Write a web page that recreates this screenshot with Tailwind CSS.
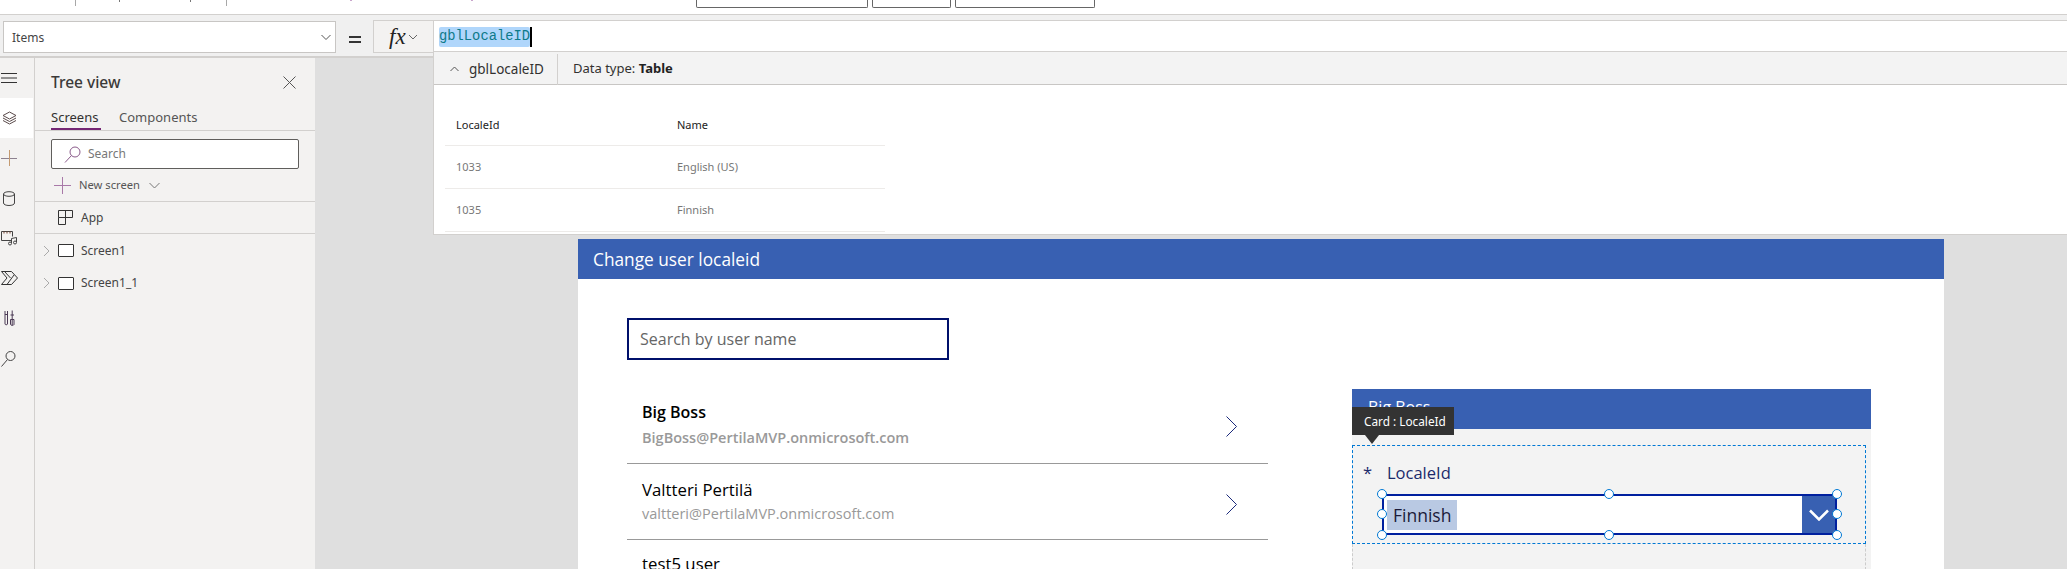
<!DOCTYPE html>
<html>
<head>
<meta charset="utf-8">
<script src="https://cdn.jsdelivr.net/npm/@tailwindcss/browser@4"></script>
<title>Power Apps</title>
</head>
<body class="bg-white">
<div class="relative w-[2067px] h-[569px] overflow-hidden flex flex-col font-['Noto_Sans',sans-serif] text-[#323130]">

  <!-- ribbon remainder -->
  <div class="h-[14px] shrink-0 bg-white relative">
    <div class="flex h-[6px]">
      <div class="w-[76px] border-r border-[#a8a8a8]"></div>
      <div class="w-[44px] h-[2px] border-r border-[#777]"></div>
      <div class="w-[71px] h-[2px] border-r border-[#777]"></div>
      <div class="w-[36px] border-r border-[#a8a8a8]"></div>
      <div class="w-[125px] h-[1px] border-r-2 border-[#c9a6cc]"></div>
      <div class="w-[121px] h-[1px] border-r-2 border-[#c9a6cc]"></div>
    </div>
    <div class="absolute left-[696px] top-0 flex gap-[4px]">
      <div class="w-[172px] h-[8px] border border-t-0 border-[#666] rounded-b-[2px] bg-white"></div>
      <div class="w-[79px] h-[8px] border border-t-0 border-[#666] rounded-b-[2px] bg-white"></div>
      <div class="w-[140px] h-[8px] border border-t-0 border-[#666] rounded-b-[2px] bg-white"></div>
    </div>
  </div>

  <!-- formula bar -->
  <div class="h-[43px] shrink-0 bg-[#f0f0f0] border-y border-[#d2d0ce] flex items-start">
    <div class="ml-[3px] mt-[6px] w-[333px] h-[32px] bg-white border border-[#c8c6c4] flex items-center justify-between pl-[8px] pr-[3px] text-[12px] text-[#444]">
      <span class="mt-[1px]">Items</span>
      <svg class="w-[12px] h-[12px]" viewBox="0 0 12 12" fill="none" stroke="#555" stroke-width="1"><path d="M1.5 4l4.5 4.5 4.500-4.500"/></svg>
    </div>
    <div class="w-[37px] mt-[6px] h-[32px] flex items-center justify-center">
      <div class="w-[12px] h-[7px] mt-[4px] border-y-2 border-[#333]"></div>
    </div>
    <div class="w-[60px] h-[33px] mt-[5px] bg-[#f3f2f1] border-y border-l border-[#d2d0ce] flex items-center pl-[15px] gap-[2px]">
      <span class="font-['Liberation_Serif',serif] italic text-[23px] leading-none text-[#222]">fx</span>
      <svg class="w-[10px] h-[10px]" viewBox="0 0 10 10" fill="none" stroke="#666" stroke-width="1"><path d="M1 3l4 4 4-4"/></svg>
    </div>
    <div class="flex-1 h-[32px] mt-[5px] bg-white border-y border-l border-[#d2d0ce] flex items-center pl-[5px]">
      <span class="mt-[1px] h-[20px] leading-[20px] bg-[#b0d6fb] rounded-[2px] font-['Liberation_Mono',monospace] text-[13.8px] text-[#0e7a8a]">gblLocaleID</span>
      <span class="mt-[1px] w-[2px] h-[20px] bg-black"></span>
    </div>
  </div>

  <!-- main -->
  <div class="flex-1 flex min-h-0 border-t border-[#d2d0ce]">
    <!-- rail -->
    <div class="w-[35px] shrink-0 bg-[#f3f2f1] border-r border-[#d2d0ce] flex flex-col">
      <div class="h-[40px] flex items-center pl-[1px]">
        <svg width="16" height="12" viewBox="0 0 16 12" stroke="#333" stroke-width="1"><path d="M0 1.500h16M0 6h16M0 10.500h16"/></svg>
      </div>
      <div class="h-[40px] w-[33px] bg-white flex items-center pl-[2px]">
        <svg width="15" height="15" viewBox="0 0 15 15" fill="none" stroke="#5a4a4a" stroke-width="1"><path d="M7.500 1L14 4.500 7.500 8 1 4.500z"/><path d="M1 7l6.500 3.500L14 7"/><path d="M1 9.500L7.500 13 14 9.500"/></svg>
      </div>
      <div class="h-[40px] flex items-center pl-[1px]">
        <svg width="16" height="16" viewBox="0 0 16 16" stroke-width="1"><path d="M0 8.500h16" stroke="#8d8290"/><path d="M8.500 0v16" stroke="#c49a70"/></svg>
      </div>
      <div class="h-[40px] flex items-center pl-[3px]">
        <svg width="12" height="15" viewBox="0 0 12 15" fill="none" stroke="#444" stroke-width="1"><path d="M.5 3v9c0 1.500 2.500 2.500 5.500 2.500s5.500-1 5.500-2.500V3"/><ellipse cx="6" cy="3" rx="5.500" ry="2.300"/></svg>
      </div>
      <div class="h-[40px] flex items-center pl-[1px]">
        <svg width="17" height="15" viewBox="0 0 17 15" fill="none" stroke="#444" stroke-width="1"><path d="M10 9.500H.5V.5h11v5"/><path d="M3 .5v2M6 .5v2M9 .5v2" stroke="#743"/><path d="M10.500 12V7.500l5-1V11"/><circle cx="9" cy="12.500" r="1.500"/><circle cx="14" cy="11.500" r="1.500"/></svg>
      </div>
      <div class="h-[40px] flex items-center pl-[1px]">
        <svg width="17" height="14" viewBox="0 0 17 14" fill="none" stroke="#333" stroke-width="1"><path d="M.5.500h10l6 6.500-6 6.500H.5L6 7z"/><path d="M6 13.500L13 4M3.500 .5L9.500 7"/></svg>
      </div>
      <div class="h-[40px] flex items-center pl-[4px]">
        <svg width="11" height="16" viewBox="0 0 11 16" fill="none" stroke="#4b3a55" stroke-width="1"><path d="M1 1v13c0 1 2.500 1 2.500 0V1M1 4.500h2.500"/><path d="M6.500 5h3.500M8.200 .5v15"/><path d="M6.500 9.500h3.500v5c0 1-3.500 1-3.500 0z"/></svg>
      </div>
      <div class="mt-[3px] h-[34px] flex items-center pl-[1px]">
        <svg width="15" height="17" viewBox="0 0 15 17" fill="none" stroke="#444" stroke-width="1"><circle cx="9.500" cy="6" r="4.500"/><path d="M6.500 9.500L.5 16.500"/></svg>
      </div>
    </div>

    <!-- tree view -->
    <div class="w-[280px] shrink-0 bg-[#f3f2f1] flex flex-col">
      <div class="h-[45px] pt-[4px] pl-[16px] pr-[19px] flex items-center justify-between">
        <span class="text-[15.500px] font-medium text-[#3b3a39]">Tree view</span>
        <svg width="13" height="13" viewBox="0 0 13 13" stroke="#555" stroke-width="1"><path d="M.5.500l12 12M12.500.500l-12 12"/></svg>
      </div>
      <div class="h-[28px] border-b border-[#d2d0ce] flex pl-[16px] gap-[18px] text-[13px] leading-[28px]">
        <span class="w-[50px] h-[27px] border-b-[2px] border-[#742774] text-[#323130]">Screens</span>
        <span class="text-[#555]">Components</span>
      </div>
      <div class="pt-[8px] pl-[16px]">
        <div class="w-[248px] h-[30px] border border-[#605e5c] rounded-[2px] bg-white flex items-center pl-[12px] gap-[7px] text-[12px] text-[#777]">
          <svg width="17" height="17" viewBox="0 0 17 17" fill="none" stroke="#8a5a8a" stroke-width="1"><circle cx="11" cy="6" r="5"/><path d="M7.500 9.500L1 16.500"/></svg>
          <span>Search</span>
        </div>
      </div>
      <div class="h-[33px] pl-[19px] flex items-center border-b border-[#d2d0ce] text-[11.200px] text-[#555]">
        <svg width="17" height="17" viewBox="0 0 17 17" stroke="#a879a8" stroke-width="1"><path d="M0 8.500h17M8.500 0v17"/></svg>
        <span class="ml-[8px]">New screen</span>
        <svg class="ml-[9px]" width="11" height="11" viewBox="0 0 11 11" fill="none" stroke="#777" stroke-width="1"><path d="M.5 3l5 5 5-5"/></svg>
      </div>
      <div class="h-[32px] pl-[23px] flex items-center border-b border-[#d2d0ce] text-[12px] text-[#444]">
        <svg width="15" height="15" viewBox="0 0 15 15" fill="none" stroke="#333" stroke-width="1"><path d="M.5.500h14v7h-14zM.5 7.500v7h7V.5"/></svg>
        <span class="ml-[8px]">App</span>
      </div>
      <div class="h-[33px] pl-[5px] flex items-center text-[12px] text-[#444]">
        <svg width="12" height="12" viewBox="0 0 12 12" fill="none" stroke="#aaa" stroke-width="1"><path d="M4 1l5 5-5 5"/></svg>
        <span class="ml-[6px] w-[16px] h-[13px] border border-[#333] bg-white rounded-[1px]"></span>
        <span class="ml-[7px]">Screen1</span>
      </div>
      <div class="h-[32px] pl-[5px] flex items-center text-[12px] text-[#444]">
        <svg width="12" height="12" viewBox="0 0 12 12" fill="none" stroke="#aaa" stroke-width="1"><path d="M4 1l5 5-5 5"/></svg>
        <span class="ml-[6px] w-[16px] h-[13px] border border-[#333] bg-white rounded-[1px]"></span>
        <span class="ml-[7px]">Screen1_1</span>
      </div>
    </div>

    <!-- canvas -->
    <div class="flex-1 bg-[#dfdfdf] pl-[263px] pt-[181px] min-w-0 overflow-hidden">
      <div class="w-[1366px] h-[400px] bg-white font-['Open_Sans',sans-serif]">
        <div class="h-[40px] bg-[#3860b2] text-white text-[17.300px] leading-[41px] pl-[15px]">Change user localeid</div>
        <div class="flex">
          <!-- gallery column -->
          <div class="w-[774px] pl-[49px]">
            <div class="mt-[39px] w-[322px] h-[42px] border-2 border-[#00106b] flex items-center pl-[11px] text-[16px] text-[#666]">Search by user name</div>
            <div class="mt-[25px] w-[641px]">
              <div class="h-[79px] border-b border-[#999] flex items-center justify-between pl-[15px] pr-[31px] pt-[2px]">
                <div>
                  <div class="text-[16px] leading-[25px] font-semibold text-black">Big Boss</div>
                  <div class="text-[14.500px] leading-[25px] font-semibold text-[#999]">BigBoss@PertilaMVP.onmicrosoft.com</div>
                </div>
                <svg class="mt-[3px]" width="11" height="21" viewBox="0 0 11 21" fill="none" stroke="#1b2a7b" stroke-width="1"><path d="M.5.500l10 10-10 10"/></svg>
              </div>
              <div class="h-[76px] border-b border-[#999] flex items-center justify-between pl-[15px] pr-[31px]">
                <div>
                  <div class="text-[16.800px] leading-[25px] text-black">Valtteri Pertilä</div>
                  <div class="text-[14.500px] leading-[24px] text-[#999]">valtteri@PertilaMVP.onmicrosoft.com</div>
                </div>
                <svg class="mt-[5px]" width="11" height="21" viewBox="0 0 11 21" fill="none" stroke="#1b2a7b" stroke-width="1"><path d="M.5.500l10 10-10 10"/></svg>
              </div>
              <div class="pl-[15px] pt-[11px] text-[16.800px] leading-[25px] text-black">test5 user</div>
            </div>
          </div>
          <!-- form -->
          <div class="relative mt-[110px] w-[519px] h-[180px] bg-[#f3f3f3]">
            <div class="h-[40px] bg-[#3860b2] text-white text-[16px] leading-[36px] pl-[16px]">Big Boss</div>
            <div class="relative ml-0 mt-[16px] w-[514px] h-[99px] border border-dashed border-[#0078d4]">
              <div class="flex items-center h-[48px] pt-[6px] text-[16.500px] text-[#1b2a6b]">
                <span class="ml-[10px] w-[24px]">*</span><span>LocaleId</span>
              </div>
              <div class="relative ml-[29px] w-[455px] h-[41px] border-2 border-[#00209f] bg-white flex items-center justify-between">
                <span class="ml-[3px] h-[30px] leading-[30px] px-[6px] bg-[#b9c9e3] text-[17.500px] text-[#1b1b3a]">Finnish</span>
                <div class="w-[33px] h-full bg-[#3860b2] flex items-center justify-center">
                  <svg width="20" height="12" viewBox="0 0 20 12" fill="none" stroke="#fff" stroke-width="2.500"><path d="M1 1.500l9 9 9-9"/></svg>
                </div>
                <span class="absolute -left-[7px] -top-[7px] w-[10px] h-[10px] rounded-full bg-white border border-[#0078d4]"></span>
                <span class="absolute left-[220px] -top-[7px] w-[10px] h-[10px] rounded-full bg-white border border-[#0078d4]"></span>
                <span class="absolute -right-[7px] -top-[7px] w-[10px] h-[10px] rounded-full bg-white border border-[#0078d4]"></span>
                <span class="absolute -left-[7px] top-[13px] w-[10px] h-[10px] rounded-full bg-white border border-[#0078d4]"></span>
                <span class="absolute -right-[7px] top-[13px] w-[10px] h-[10px] rounded-full bg-white border border-[#0078d4]"></span>
                <span class="absolute -left-[7px] -bottom-[7px] w-[10px] h-[10px] rounded-full bg-white border border-[#0078d4]"></span>
                <span class="absolute left-[220px] -bottom-[7px] w-[10px] h-[10px] rounded-full bg-white border border-[#0078d4]"></span>
                <span class="absolute -right-[7px] -bottom-[7px] w-[10px] h-[10px] rounded-full bg-white border border-[#0078d4]"></span>
              </div>
            </div>
            <div class="w-[514px] h-[26px] border-x border-dashed border-[#ccc]"></div>
            <!-- tooltip -->
            <div class="absolute left-0 top-[18px] w-[102px] h-[28px] bg-[#333] text-white text-[11.800px] leading-[28px] pl-[12px] font-['Noto_Sans',sans-serif]">Card : LocaleId</div>
            <div class="absolute left-[13px] top-[46px] w-0 h-0 border-x-[7px] border-x-transparent border-t-[9px] border-t-[#333]"></div>
          </div>
        </div>
      </div>
    </div>
  </div>

  <!-- formula result dropdown -->
  <div class="absolute left-[433px] top-[52px] right-0 h-[183px] bg-white border-l border-b border-[#d2d0ce]">
    <div class="h-[33px] bg-[#f3f3f3] border-b border-[#c8c6c4] flex items-center pt-[2px] text-[13px]">
      <svg class="ml-[16px]" width="9" height="6" viewBox="0 0 9 6" fill="none" stroke="#555" stroke-width="1"><path d="M.5 5l4-4 4 4"/></svg>
      <span class="ml-[10px] w-[88px] text-[13.500px] text-[#323130]">gblLocaleID</span>
      <span class="w-px h-[31px] bg-[#d2d0ce]"></span>
      <span class="ml-[15px] text-[#323130]">Data type: <b class="font-bold text-[#222]">Table</b></span>
    </div>
    <div class="ml-[11px] w-[440px] pt-[28px] text-[11px]">
      <div class="h-[33px] pb-[8px] border-b border-[#edebe9] flex items-center pl-[11px] text-[#222]"><span class="w-[221px]">LocaleId</span><span>Name</span></div>
      <div class="h-[43px] border-b border-[#edebe9] flex items-center pl-[11px] text-[#777]"><span class="w-[221px]">1033</span><span>English (US)</span></div>
      <div class="h-[43px] border-b border-[#edebe9] flex items-center pl-[11px] text-[#777]"><span class="w-[221px]">1035</span><span>Finnish</span></div>
    </div>
  </div>
</div>
</body>
</html>
